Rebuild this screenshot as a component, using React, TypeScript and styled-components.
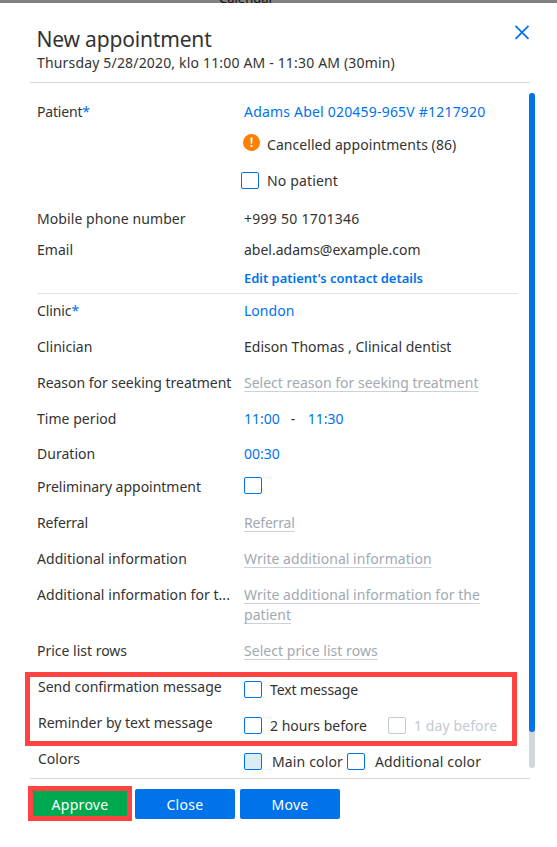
import React from 'react';
import styled, { createGlobalStyle, css } from 'styled-components';

const GlobalStyle = createGlobalStyle`
  *, *::before, *::after { box-sizing: border-box; }
  body {
    margin: 0;
    background: #fff;
    color: #333;
    font: 14px/20px "Noto Sans", "Open Sans", sans-serif;
    overflow: hidden;
  }
`;

const BLUE = '#0073eb';

const Page = styled.div`
  width: 557px;
  height: 847px;
  display: flex;
  flex-direction: column;
`;

const Backdrop = styled.div`
  flex: none;
  height: 3px;
  padding-left: 219px;
  overflow: hidden;
  background: #808080;
  color: #111;
  line-height: 20px;
`;

const BackdropText = styled.div`
  margin-top: -12px;
  font-size: 13px;
`;

const Dialog = styled.section`
  flex: 1;
  padding: 0 22px 0 30px;
  background: #fff;
`;

const Header = styled.header`
  display: flex;
  justify-content: space-between;
  width: 500px;
  height: 80px;
  padding: 21px 0 0 7px;
  border-bottom: 1px solid #d0d7dd;
`;

const Title = styled.h1`
  margin: 0 0 0 -0.6px;
  font-size: 21px;
  line-height: 30px;
  font-weight: 400;
  letter-spacing: -0.17px;
`;

const Subtitle = styled.div`
  margin-top: -1px;
  letter-spacing: 0.17px;
`;

const CloseIconButton = styled.button`
  width: 16px;
  height: 16px;
  padding: 0;
  border: 0;
  background: none;
  line-height: 0;
`;

const Body = styled.div`
  display: flex;
  height: 695px;
`;

const Form = styled.div`
  flex: none;
  width: 499px;
  padding: 19px 11px 0 7px;
`;

const ScrollTrack = styled.div`
  flex: none;
  width: 6px;
  height: 675px;
  margin-top: 10px;
  border-radius: 3px;
  background: #d0d7dd;
`;

const ScrollThumb = styled.div`
  height: 639px;
  border-radius: 3px;
  background: ${BLUE};
`;

const Row = styled.div<{ $h?: number }>`
  display: grid;
  grid-template-columns: 207px 1fr;
  height: ${p => p.$h ?? 36}px;
`;

const Text = styled.span<{ $ls?: number }>`
  white-space: nowrap;
  letter-spacing: ${p => p.$ls ?? 0.02}px;
`;

const Label = styled(Text)<{ $shift?: boolean }>`
  padding-left: ${p => (p.$shift ? 1 : 0)}px;
`;

const Required = styled.span`
  color: ${BLUE};
`;

const LinkText = styled(Text)`
  color: ${BLUE};
`;

const StrongLink = styled(LinkText)`
  font-size: 13px;
  font-weight: 600;
`;

const Placeholder = styled.span<{ $ls?: number }>`
  justify-self: start;
  align-self: start;
  color: #a2a9b0;
  letter-spacing: ${p => p.$ls ?? 0.04}px;
  text-decoration: underline;
  text-decoration-color: #cbd2d9;
  text-decoration-thickness: 1px;
  text-underline-offset: 3px;
  text-decoration-skip-ink: none;
`;

const Line = styled.span`
  display: block;
  white-space: nowrap;
`;

const Divider = styled.div`
  height: 1px;
  margin: -3px 0 7px;
  background: #dfe2e6;
`;

const Options = styled.div<{ $drop?: number; $pull?: number }>`
  display: flex;
  height: 20px;
  margin-top: ${p => p.$drop ?? 0}px;
  margin-left: ${p => p.$pull ?? 0}px;
`;

const Box = styled.span<{ $disabled?: boolean; $fill?: string; $gap?: number }>`
  flex: none;
  width: 18px;
  height: 17px;
  margin: 1px ${p => p.$gap ?? 8}px 0 0;
  border: 1px solid ${p => (p.$disabled ? '#c3cad1' : BLUE)};
  border-radius: 2px;
  background: ${p => p.$fill ?? '#fff'};
`;

const OptionText = styled(Text)<{ $w?: number; $disabled?: boolean }>`
  ${p => p.$w && css`width: ${p.$w}px;`}
  ${p => p.$disabled && css`color: #c3cad1;`}
`;

const Alert = styled.svg`
  flex: none;
  width: 17px;
  height: 17px;
  margin: -1px 7px 0 -1px;
`;

const Marked = styled.div`
  position: relative;
  height: 72px;
`;

const Highlight = styled.div`
  position: absolute;
  inset: -5px 1px -2px -12px;
  height: 74px;
  border: 5px solid #ff4343;
  pointer-events: none;
`;

const Footer = styled.footer`
  display: flex;
  gap: 5px;
  width: 500px;
  padding-top: 10px;
  border-top: 1px solid #d0d7dd;
`;

const Button = styled.button<{ $primary?: boolean }>`
  position: relative;
  width: 100px;
  height: 30px;
  padding: 1px 0 0;
  border: 0;
  border-radius: 2px;
  background: ${p => (p.$primary ? '#00a94f' : BLUE)};
  color: #fff;
  font: inherit;
  letter-spacing: 0.3px;
`;

const ButtonHighlight = styled.span`
  position: absolute;
  inset: -3px -2px -2px -2px;
  border: 5px solid #ff4343;
`;

export default function App() {
  return (
    <>
      <GlobalStyle />
      <Page>
        <Backdrop><BackdropText>Calendar</BackdropText></Backdrop>
        <Dialog>
          <Header>
            <div>
              <Title>New appointment</Title>
              <Subtitle>Thursday 5/28/2020, klo 11:00 AM - 11:30 AM (30min)</Subtitle>
            </div>
            <CloseIconButton aria-label="Close dialog">
              <svg width="16" height="16" viewBox="0 0 16 16" stroke={BLUE} strokeWidth="1.8">
                <path d="M1.5 1.8 14.5 14.8M14.5 1.8 1.5 14.8" />
              </svg>
            </CloseIconButton>
          </Header>
          <Body>
            <Form>
              <Row $h={33}>
                <Label $ls={-0.18}>Patient<Required>*</Required></Label>
                <LinkText $ls={0.2}>Adams Abel 020459-965V #1217920</LinkText>
              </Row>
              <Row>
                <span />
                <Options>
                  <Alert viewBox="0 0 17 17">
                    <circle cx="8.5" cy="8.5" r="8.5" fill="#ff8000" />
                    <path d="M7.4 3.5h2.2l-.35 6.2h-1.5zM7.5 11h2v2h-2z" fill="#fff" />
                  </Alert>
                  <OptionText $ls={0.06}>Cancelled appointments (86)</OptionText>
                </Options>
              </Row>
              <Row $h={38}>
                <span />
                <Options $pull={-3}>
                  <Box />
                  <OptionText $ls={0.15}>No patient</OptionText>
                </Options>
              </Row>
              <Row $h={31}>
                <Label $ls={0.08}>Mobile phone number</Label>
                <Text $ls={0.28}>+999 50 1701346</Text>
              </Row>
              <Row $h={28}>
                <Label>Email</Label>
                <Text $ls={0}>abel.adams@example.com</Text>
              </Row>
              <Row $h={28}>
                <span />
                <StrongLink $ls={-0.03}>Edit patient's contact details</StrongLink>
              </Row>
              <Divider />
              <Row>
                <Label $ls={-0.1}>Clinic<Required>*</Required></Label>
                <LinkText>London</LinkText>
              </Row>
              <Row>
                <Label>Clinician</Label>
                <Text>Edison Thomas , Clinical dentist</Text>
              </Row>
              <Row>
                <Label $ls={-0.03}>Reason for seeking treatment</Label>
                <Placeholder $ls={0}>Select reason for seeking treatment</Placeholder>
              </Row>
              <Row $h={35}>
                <Label $ls={0.04}>Time period</Label>
                <Options>
                  <LinkText $ls={0}>11:00</LinkText>
                  <OptionText $w={28}>&nbsp;&nbsp; -</OptionText>
                  <LinkText $ls={0}>11:30</LinkText>
                </Options>
              </Row>
              <Row $h={33}>
                <Label>Duration</Label>
                <LinkText $ls={0}>00:30</LinkText>
              </Row>
              <Row>
                <Label $ls={-0.02}>Preliminary appointment</Label>
                <Options $drop={-1}><Box /></Options>
              </Row>
              <Row>
                <Label $ls={-0.15}>Referral</Label>
                <Placeholder $ls={-0.18}>Referral</Placeholder>
              </Row>
              <Row>
                <Label $ls={0.05}>Additional information</Label>
                <Placeholder>Write additional information</Placeholder>
              </Row>
              <Row $h={56}>
                <Label $ls={0.05}>Additional information for t...</Label>
                <Placeholder>
                  <Line>Write additional information for the</Line>
                  <Line>patient</Line>
                </Placeholder>
              </Row>
              <Row>
                <Label $ls={-0.01}>Price list rows</Label>
                <Placeholder>Select price list rows</Placeholder>
              </Row>
              <Marked>
                <Row>
                  <Label $shift $ls={0}>Send confirmation message</Label>
                  <Options $drop={3}>
                    <Box />
                    <OptionText $ls={-0.1}>Text message</OptionText>
                  </Options>
                </Row>
                <Row>
                  <Label $shift $ls={0}>Reminder by text message</Label>
                  <Options $drop={3}>
                    <Box />
                    <OptionText $w={118}>2 hours before</OptionText>
                    <Box $disabled />
                    <OptionText $ls={0.1} $disabled>1 day before</OptionText>
                  </Options>
                </Row>
                <Highlight />
              </Marked>
              <Row $h={29}>
                <Label $shift $ls={0}>Colors</Label>
                <Options $drop={3}>
                  <Box $fill="#daedf5" $gap={10} />
                  <OptionText $w={75} $ls={0.15}>Main color</OptionText>
                  <Box $gap={10} />
                  <OptionText $ls={0.15}>Additional color</OptionText>
                </Options>
              </Row>
            </Form>
            <ScrollTrack><ScrollThumb /></ScrollTrack>
          </Body>
          <Footer>
            <Button $primary>Approve<ButtonHighlight /></Button>
            <Button>Close</Button>
            <Button>Move</Button>
          </Footer>
        </Dialog>
      </Page>
    </>
  );
}
